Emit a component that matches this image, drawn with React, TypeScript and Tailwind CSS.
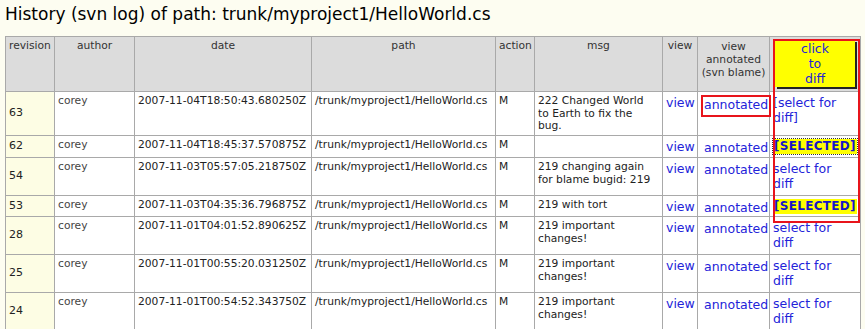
import * as React from 'react';

type Row = {
  rev: string;
  date: string;
  msg: string[];
  diff: 'select' | 'bracket' | 'selected' | 'selectedFocus';
  h: string;
};

const rows: Row[] = [
  { rev: '63', date: '2007-11-04T18:50:43.680250Z', msg: ['222 Changed World', 'to Earth to fix the', 'bug.'], diff: 'bracket', h: 'h-[44px]' },
  { rev: '62', date: '2007-11-04T18:45:37.570875Z', msg: [], diff: 'selectedFocus', h: 'h-[22px]' },
  { rev: '54', date: '2007-11-03T05:57:05.218750Z', msg: ['219 changing again', 'for blame bugid: 219'], diff: 'select', h: 'h-[38px]' },
  { rev: '53', date: '2007-11-03T04:35:36.796875Z', msg: ['219 with tort'], diff: 'selected', h: 'h-[21px]' },
  { rev: '28', date: '2007-11-01T04:01:52.890625Z', msg: ['219 important', 'changes!'], diff: 'select', h: 'h-[38px]' },
  { rev: '25', date: '2007-11-01T00:55:20.031250Z', msg: ['219 important', 'changes!'], diff: 'select', h: 'h-[38px]' },
  { rev: '24', date: '2007-11-01T00:54:52.343750Z', msg: ['219 important', 'changes!'], diff: 'select', h: 'h-[37px]' },
];

const th = 'border border-[#a9a9a9] bg-[#dcdcdc] px-[3px] pt-[3px] align-top text-center font-normal text-[10.7px] leading-[12.5px] text-[#333]';
const td = 'border border-[#a9a9a9] bg-white px-[3px] pt-[3px] align-top text-[10.7px] leading-[12.5px] text-[#222]';
const link = 'text-[12.5px] leading-[15px] text-[#2323d9]';

function DiffCell({ kind }: { kind: Row['diff'] }) {
  if (kind === 'bracket') return <div className={`${link} w-[70px]`}>[select for diff]</div>;
  if (kind === 'select') return <div className={`${link} w-[70px]`}>select for diff</div>;
  return (
    <span
      className={`inline-block bg-[#ffff00] px-[1px] text-[12px] leading-[15px] font-bold tracking-[0.3px] text-[#1515c8] ${
        kind === 'selectedFocus' ? 'outline outline-1 outline-dotted outline-[#333]' : ''
      }`}
    >
      [SELECTED]
    </span>
  );
}

export default function App() {
  return (
    <div className="h-[329px] w-[865px] overflow-hidden bg-[#fdfdf1] px-[5px] font-['DejaVu_Sans',Verdana,sans-serif]">
      <h1 className="pt-[5px] text-[17px] leading-[19px] font-normal text-black">
        History (svn log) of path: trunk/myproject1/HelloWorld.cs
      </h1>

      <div className="relative mt-[12px] w-[855px]">
        <table className="w-[855px] table-fixed border-collapse">
          <colgroup>
            <col className="w-[49px]" />
            <col className="w-[80px]" />
            <col className="w-[177px]" />
            <col className="w-[184px]" />
            <col className="w-[39px]" />
            <col className="w-[128px]" />
            <col className="w-[35px]" />
            <col className="w-[72px]" />
            <col className="w-[91px]" />
          </colgroup>
          <thead>
            <tr className="h-[55px]">
              <th className={`${th} text-left`}>revision</th>
              <th className={th}>author</th>
              <th className={th}>date</th>
              <th className={th}>path</th>
              <th className={th}>action</th>
              <th className={th}>msg</th>
              <th className={th}>view</th>
              <th className={`${th} leading-[13px]`}>
                view
                <br />
                annotated
                <br />
                (svn blame)
              </th>
              <th className="border border-[#a9a9a9] bg-[#dcdcdc] p-0 align-top">
                <div className="mx-auto mt-[3px] flex h-[47px] w-[80px] flex-col items-center justify-center bg-[#ffff00] text-[12.5px] leading-[15px] font-normal text-[#2323d9] shadow-[2px_2px_0_#222]">
                  <span>click</span>
                  <span>to</span>
                  <span>diff</span>
                </div>
              </th>
            </tr>
          </thead>
          <tbody>
            {rows.map((r) => (
              <tr key={r.rev} className={r.h}>
                <td className="border border-[#a9a9a9] bg-[#fdfde4] px-[3px] align-middle text-[11px] text-[#222]">
                  {r.rev}
                </td>
                <td className={`${td} text-[#444]`}>corey</td>
                <td className={td}>{r.date}</td>
                <td className={td}>/trunk/myproject1/HelloWorld.cs</td>
                <td className={td}>M</td>
                <td className={td}>
                  {r.msg.map((m, i) => (
                    <div key={i}>{m}</div>
                  ))}
                </td>
                <td className={`${td} pt-[2px]`}>
                  <span className={link}>view</span>
                </td>
                <td className={`${td} px-[1px] pt-[1px]`}>
                  {r.rev === '63' ? (
                    <span className={`${link} inline-block border-2 border-[#e8141b] px-[1px] pb-[3px]`}>annotated</span>
                  ) : (
                    <span className={`${link} inline-block px-[3px] pt-[1px]`}>annotated</span>
                  )}
                </td>
                <td className={`${td} pt-[2px]`}>
                  <DiffCell kind={r.diff} />
                </td>
              </tr>
            ))}
          </tbody>
        </table>

        {/* red highlight around the diff column */}
        <div className="pointer-events-none absolute left-[768px] top-[3px] h-[184px] w-[87px] border-2 border-[#e8141b]" />
      </div>
    </div>
  );
}
